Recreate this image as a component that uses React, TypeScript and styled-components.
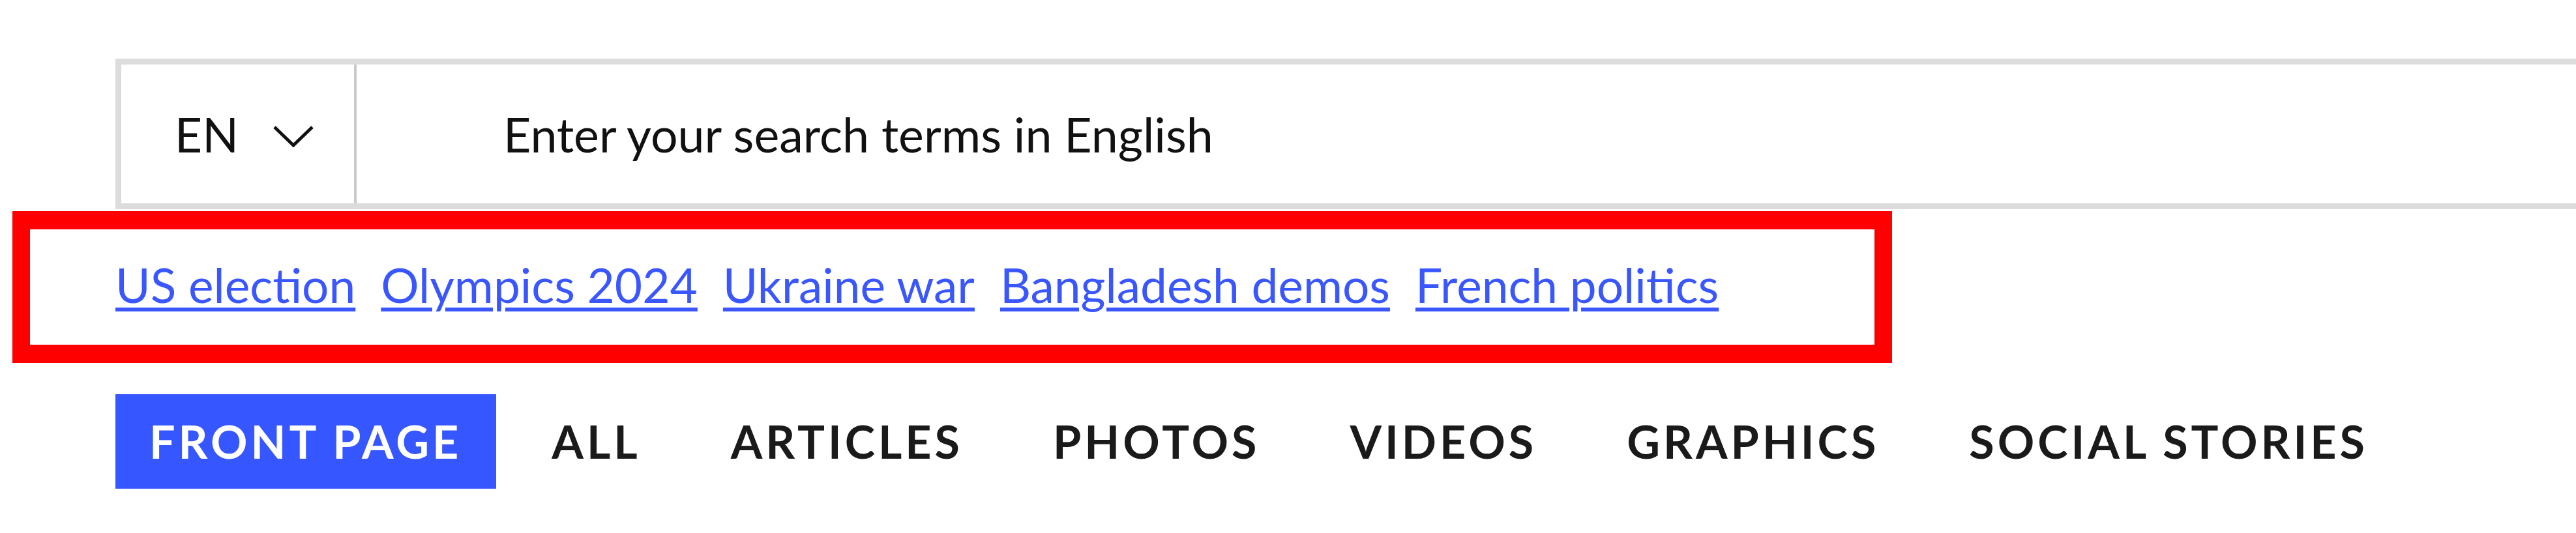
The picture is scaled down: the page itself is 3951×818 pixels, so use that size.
import React from "react";
import styled, { createGlobalStyle } from "styled-components";

const GlobalStyle = createGlobalStyle`
  html, body {
    margin: 0;
    padding: 0;
    background: #ffffff;
  }
  body {
    font-family: Lato, "Liberation Sans", sans-serif;
    overflow: hidden;
  }
  * { box-sizing: border-box; }
`;

const Page = styled.div`
  width: 3951px;
  height: 818px;
  overflow: hidden;
  padding-top: 90px;
`;

const SearchBar = styled.form`
  display: flex;
  margin-left: 177px;
  width: 3900px;
  height: 231px;
  border: 9px solid #dcdcdc;
  border-right: none;
  background: #ffffff;
`;

const LangSelect = styled.button`
  display: flex;
  align-items: center;
  gap: 52px;
  width: 361px;
  flex: 0 0 auto;
  padding: 0 0 0 82px;
  margin: 0;
  border: none;
  border-right: 4px solid #cacaca;
  background: transparent;
  font-family: Lato, "Liberation Sans", sans-serif;
  font-size: 73px;
  font-weight: 400;
  color: #111111;
  cursor: pointer;
`;

const Chevron = styled.svg`
  display: block;
  margin-top: 6px;
`;

const SearchInput = styled.input`
  flex: 1 1 auto;
  border: none;
  outline: none;
  padding: 0 0 0 225px;
  margin: 0;
  background: transparent;
  font-family: Lato, "Liberation Sans", sans-serif;
  font-size: 73.5px;
  color: #111111;
  &::placeholder {
    color: #111111;
    opacity: 1;
  }
`;

const Highlight = styled.nav`
  display: flex;
  align-items: center;
  gap: 39px;
  margin: 3px 0 0 19px;
  width: 2883px;
  height: 233px;
  border: 28px solid #ff0000;
  border-left-width: 27px;
  border-right-width: 27px;
  padding: 0 0 6px 131px;
`;

const TopicLink = styled.a`
  font-family: Lato, "Liberation Sans", sans-serif;
  font-size: 73px;
  line-height: 1.2;
  color: #3a57ff;
  text-decoration: underline;
  text-decoration-thickness: 6px;
  text-underline-offset: 7px;
  white-space: nowrap;
`;

const Tabs = styled.ul`
  display: flex;
  gap: 33px;
  list-style: none;
  margin: 48px 0 0 177px;
  padding: 0;
`;

const Tab = styled.li<{ $active?: boolean }>`
  height: 145px;
  line-height: 145px;
  padding: 0 53px 0 52px;
  font-family: Lato, "Liberation Sans", sans-serif;
  font-size: 70px;
  font-weight: 700;
  letter-spacing: 5px;
  text-transform: uppercase;
  white-space: nowrap;
  color: ${(p) => (p.$active ? "#ffffff" : "#1a1a1a")};
  background: ${(p) => (p.$active ? "#3657ff" : "transparent")};
`;

const topics = [
  "US election",
  "Olympics 2024",
  "Ukraine war",
  "Bangladesh demos",
  "French politics",
];

const tabs = [
  "Front page",
  "All",
  "Articles",
  "Photos",
  "Videos",
  "Graphics",
  "Social stories",
];

export default function App() {
  return (
    <>
      <GlobalStyle />
      <Page>
        <SearchBar onSubmit={(e) => e.preventDefault()}>
          <LangSelect type="button">
            <span>EN</span>
            <Chevron width="64" height="34" viewBox="0 0 64 34" aria-hidden>
              <path
                d="M3 3 L32 31 L61 3"
                fill="none"
                stroke="#111111"
                strokeWidth="5"
              />
            </Chevron>
          </LangSelect>
          <SearchInput placeholder="Enter your search terms in English" />
        </SearchBar>
        <Highlight>
          {topics.map((t) => (
            <TopicLink key={t} href="#">
              {t}
            </TopicLink>
          ))}
        </Highlight>
        <Tabs>
          {tabs.map((t, i) => (
            <Tab key={t} $active={i === 0}>
              {t}
            </Tab>
          ))}
        </Tabs>
      </Page>
    </>
  );
}
